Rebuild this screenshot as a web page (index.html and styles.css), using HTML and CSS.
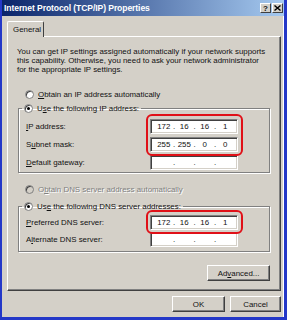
FILE: index.html
```html
<!DOCTYPE html>
<html lang="en">
<head>
    <meta charset="UTF-8">
    <title>Internet Protocol (TCP/IP) Properties</title>
    <link rel="stylesheet" href="styles.css">
</head>
<body>
    <div class="window">
        <div class="titlebar">
            <span class="title">Internet Protocol (TCP/IP) Properties</span>
            <div class="caption-btns">
                <span class="cbtn help">?</span>
                <span class="cbtn">
                    <svg width="7" height="6" viewBox="0 0 7 6"><path d="M0.5 0.5 L6.5 5.5 M6.5 0.5 L0.5 5.5" stroke="#000" stroke-width="1.4"/></svg>
                </span>
            </div>
        </div>

        <div class="body">
            <div class="tabs"><span class="tab">General</span></div>

            <div class="panel">
                <p class="intro">You can get IP settings assigned automatically if your network supports<br>this capability. Otherwise, you need to ask your network administrator<br>for the appropriate IP settings.</p>

                <div class="option first"><span class="radio"></span><span><u>O</u>btain an IP address automatically</span></div>

                <fieldset class="group">
                    <legend><span class="radio checked"></span><span>U<u>s</u>e the following IP address:</span></legend>
                    <div class="row top"><span class="label"><u>I</u>P address:</span>
                        <div class="ipbox"><span>172</span><i>.</i><span>16</span><i>.</i><span>16</span><i>.</i><span>1</span></div>
                    </div>
                    <div class="row"><span class="label">S<u>u</u>bnet mask:</span>
                        <div class="ipbox"><span>255</span><i>.</i><span>255</span><i>.</i><span>0</span><i>.</i><span>0</span></div>
                    </div>
                    <div class="row"><span class="label"><u>D</u>efault gateway:</span>
                        <div class="ipbox"><span></span><i>.</i><span></span><i>.</i><span></span><i>.</i><span></span></div>
                    </div>
                </fieldset>

                <div class="option second disabled"><span class="radio"></span><span>O<u>b</u>tain DNS server address automatically</span></div>

                <fieldset class="group dns">
                    <legend><span class="radio checked"></span><span>Us<u>e</u> the following DNS server addresses:</span></legend>
                    <div class="row top"><span class="label"><u>P</u>referred DNS server:</span>
                        <div class="ipbox"><span>172</span><i>.</i><span>16</span><i>.</i><span>16</span><i>.</i><span>1</span></div>
                    </div>
                    <div class="row"><span class="label">A<u>l</u>ternate DNS server:</span>
                        <div class="ipbox"><span></span><i>.</i><span></span><i>.</i><span></span><i>.</i><span></span></div>
                    </div>
                </fieldset>

                <div class="adv-row"><button class="btn adv">Ad<u>v</u>anced...</button></div>
            </div>

            <div class="footer">
                <button class="btn ok">OK</button>
                <button class="btn cancel">Cancel</button>
            </div>
        </div>

        <!-- red marks drawn over the screenshot -->
        <div class="mark mark-ip"></div>
        <div class="mark mark-dns"></div>
    </div>
</body>
</html>
```

FILE: styles.css
```css
*{
    margin:0;
    padding:0;
    box-sizing:border-box;
}
body{
    background:#fff;
    font-family:"Liberation Sans", Arial, sans-serif;
    font-size:7.9px;
    color:#111;
}
.window{
    position:relative;
    width:287px;
    height:320px;
    background:#d4d0c8;
    border-left:2px solid #2438c8;
    border-right:3px solid #2438c8;
    border-bottom:3px solid #2438c8;
    box-shadow:inset -1px 0 0 #fff;
}
.titlebar{
    height:16px;
    display:flex;
    align-items:center;
    justify-content:space-between;
    padding:0 0 0 2px;
    background:linear-gradient(90deg, #0a246a, #a6caf0);
}
.title{
    color:#fff;
    font-weight:bold;
    font-size:8.6px;
    letter-spacing:-0.1px;
}
.caption-btns{
    display:flex;
    gap:1px;
    margin-right:1px;
}
.cbtn{
    width:11px;
    height:10px;
    display:flex;
    align-items:center;
    justify-content:center;
    background:#d4d0c8;
    border-top:1px solid #fff;
    border-left:1px solid #fff;
    border-right:1px solid #404040;
    border-bottom:1px solid #404040;
    font-weight:bold;
    font-size:8px;
}
.body{
    padding:5px 3px 0 5px;
}
.tabs{
    display:flex;
    height:15px;
}
.tab{
    width:37px;
    height:16px;
    padding:3px 0 0 5px;
    background:#d4d0c8;
    border-top:1px solid #fff;
    border-left:1px solid #fff;
    border-right:1px solid #404040;
    border-top-left-radius:2px;
    border-top-right-radius:2px;
    position:relative;
    z-index:1;
}
.panel{
    height:255px;
    padding:0 0 0 10px;
    border-top:1px solid #fff;
    border-left:1px solid #fff;
    border-right:1px solid #404040;
    border-bottom:1px solid #404040;
    box-shadow:inset -1px -1px 0 #808080;
}
.intro{
    margin:10px 0 0 -1px;
    line-height:9px;
    white-space:nowrap;
}
.option{
    height:12px;
    display:flex;
    align-items:center;
    gap:4px;
    padding-left:7px;
}
.option.first{
    margin-top:14px;
}
.option.second{
    margin-top:10px;
}
.disabled{
    color:#808080;
    text-shadow:1px 1px 0 #fff;
}
.radio{
    width:9px;
    height:9px;
    border-radius:50%;
    background:#fff;
    border:1px solid #808080;
    box-shadow:inset 1px 1px 0 #404040;
    position:relative;
    flex:none;
}
.disabled .radio{
    background:#d4d0c8;
}
.radio.checked::after{
    content:"";
    position:absolute;
    left:2px;
    top:2px;
    width:3px;
    height:3px;
    border-radius:50%;
    background:#000;
}
.group{
    width:252px;
    margin-top:2px;
    border:1px solid #808080;
    box-shadow:1px 1px 0 #fff, inset 1px 1px 0 #fff;
    padding:0 0 2px 7px;
}
.group legend{
    height:12px;
    display:flex;
    align-items:center;
    gap:4px;
    margin-left:-4px;
    padding:0 2px 0 2px;
}
.group.dns{
    margin-top:5px;
    padding-bottom:4px;
}
.row{
    display:flex;
    align-items:center;
    height:15px;
    margin-top:3px;
}
.row.top{
    margin-top:5px;
}
.dns .row{
    margin-top:2px;
}
.dns .row.top{
    margin-top:3px;
}
.label{
    width:124px;
}
.ipbox{
    width:88px;
    height:15px;
    display:flex;
    align-items:center;
    padding:0 3px 0 4px;
    background:#fff;
    border-top:1px solid #808080;
    border-left:1px solid #808080;
    border-right:1px solid #fff;
    border-bottom:1px solid #fff;
    box-shadow:inset 1px 1px 0 #404040, inset -1px -1px 0 #d4d0c8;
}
.ipbox span{
    flex:1;
    text-align:center;
}
.ipbox i{
    font-style:normal;
    width:3px;
    text-align:center;
}
.adv-row{
    width:252px;
    display:flex;
    justify-content:flex-end;
    margin-top:13px;
}
.btn{
    font-family:inherit;
    font-size:7.9px;
    color:#111;
    height:16px;
    background:#d4d0c8;
    border-top:1px solid #fff;
    border-left:1px solid #fff;
    border-right:1px solid #404040;
    border-bottom:1px solid #404040;
    box-shadow:inset -1px -1px 0 #808080;
}
.adv{
    width:63px;
}
.footer{
    display:flex;
    justify-content:flex-end;
    gap:5px;
    margin-top:5px;
}
.ok{
    width:53px;
}
.cancel{
    width:51px;
}
.mark{
    position:absolute;
    border:2px solid #e01018;
    border-radius:6px;
}
.mark-ip{
    left:144px;
    top:114px;
    width:97px;
    height:42px;
}
.mark-dns{
    left:144px;
    top:210px;
    width:97px;
    height:24px;
}
```
